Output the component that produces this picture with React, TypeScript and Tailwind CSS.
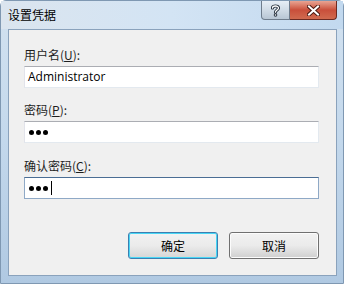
import React from 'react';

const font = { fontFamily: '"Noto Sans CJK SC", "Noto Sans", "Liberation Sans", sans-serif' };

function Label({ text, hot }: { text: string; hot: string }) {
  return (
    <div className="h-[16px] text-[12px] leading-[16px] text-[#1e1e1e]">
      {text}(<span className="underline">{hot}</span>):
    </div>
  );
}

function TextBox({ value, password, focused }: { value: string; password?: boolean; focused?: boolean }) {
  return (
    <div
      className={`h-[22px] flex items-center bg-white border pl-[3px] ${
        focused
          ? 'border-[#8fa9c6] border-t-[#4a6d94]'
          : 'border-[#e3e9ef] border-t-[#abadb3] border-l-[#e2e3ea]'
      }`}
    >
      {password ? (
        <div className="flex items-center gap-[2px] pl-[1px]">
          {value.split('').map((_, i) => (
            <span key={i} className="w-[5px] h-[5px] rounded-full bg-black" />
          ))}
          {focused && <span className="ml-[1px] w-px h-[14px] bg-black" />}
        </div>
      ) : (
        <span className="text-[12px] text-black" style={{ fontFamily: '"Open Sans", "Noto Sans", sans-serif' }}>
          {value}
        </span>
      )}
    </div>
  );
}

export default function App() {
  return (
    <div
      className="w-[344px] h-[284px] flex flex-col bg-gradient-to-b from-[#d3e2f0] via-[#c3d8ec] to-[#b0c9e2] border border-[#7f98b2] rounded-t-[6px]"
      style={font}
    >
      {/* Title bar */}
      <div className="h-[28px] flex items-start justify-between pl-[7px] pr-[6px] bg-gradient-to-r from-[#dbe5ef] via-[#d3e4f4] to-[#c2d9ef]">
        <div className="pt-[6px] text-[12px] leading-[16px] text-black">设置凭据</div>
        <div className="flex">
          <div className="w-[29px] h-[19px] flex items-center justify-center rounded-bl-[4px] border border-t-0 border-[#6e7c8c] bg-gradient-to-b from-[#e6eef6] via-[#d0dbe6] to-[#b8c6d4]">
            <svg width="9" height="13" viewBox="0 0 9 13">
              <path d="M1.5 4 C1.5 1.5 7.5 1.2 7.5 4 C7.5 6 4.5 6 4.5 8.2" fill="none" stroke="#2a3440" strokeWidth="3.2" strokeLinecap="round" />
              <circle cx="4.5" cy="11" r="1.8" fill="#2a3440" />
              <path d="M1.5 4 C1.5 1.5 7.5 1.2 7.5 4 C7.5 6 4.5 6 4.5 8.2" fill="none" stroke="#ffffff" strokeWidth="1.3" strokeLinecap="round" />
              <circle cx="4.5" cy="11" r="0.8" fill="#ffffff" />
            </svg>
          </div>
          <div className="w-[47px] h-[19px] flex items-center justify-center rounded-br-[4px] border border-t-0 border-l-0 border-[#6c2a22] bg-gradient-to-b from-[#e8a493] via-[#c94f3b] to-[#d06a4f]">
            <svg width="13" height="11" viewBox="0 0 13 11">
              <path d="M2 1.5 L11 9.5 M11 1.5 L2 9.5" stroke="#4b1a12" strokeWidth="4" strokeLinecap="square" />
              <path d="M2 1.5 L11 9.5 M11 1.5 L2 9.5" stroke="#ffffff" strokeWidth="2" strokeLinecap="square" />
            </svg>
          </div>
        </div>
      </div>

      {/* Client area */}
      <div className="flex-1 ml-[7px] mr-[6px] mb-[7px] bg-[#f0f0f0] border border-[#8aa2bc] flex flex-col pl-[15px] pr-[17px] pt-[17px]">
        <Label text="用户名" hot="U" />
        <div className="mt-[3px]">
          <TextBox value="Administrator" />
        </div>
        <div className="mt-[14px]">
          <Label text="密码" hot="P" />
        </div>
        <div className="mt-[3px]">
          <TextBox value="123" password />
        </div>
        <div className="mt-[15px]">
          <Label text="确认密码" hot="C" />
        </div>
        <div className="mt-[3px]">
          <TextBox value="123" password focused />
        </div>

        <div className="mt-[33px] flex justify-end gap-[11px]">
          <button className="w-[90px] h-[27px] rounded-[3px] border border-[#3c7fb1] shadow-[inset_0_0_0_1px_#48d6f5] bg-gradient-to-b from-[#f2f2f2] via-[#ebebeb] to-[#d6d6d6] text-[12px] text-black">
            确定
          </button>
          <button className="w-[90px] h-[27px] rounded-[3px] border border-[#707070] shadow-[inset_0_0_0_1px_#fcfcfc] bg-gradient-to-b from-[#f2f2f2] via-[#ebebeb] to-[#cfcfcf] text-[12px] text-black">
            取消
          </button>
        </div>
      </div>
    </div>
  );
}
